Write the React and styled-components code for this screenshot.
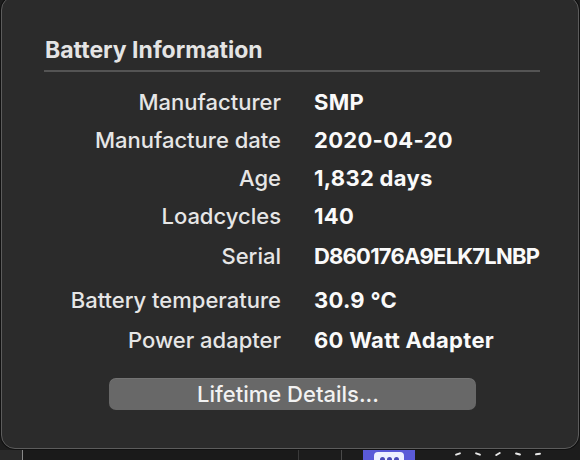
import React from "react";
import styled, { createGlobalStyle } from "styled-components";

const GlobalStyle = createGlobalStyle`
  html, body {
    margin: 0;
    padding: 0;
    background: #1d1d1d;
    overflow: hidden;
  }
  body {
    font-family: Inter, "Noto Sans", "Liberation Sans", sans-serif;
  }
`;

const rows = [
  { label: "Manufacturer", value: "SMP" },
  { label: "Manufacture date", value: "2020-04-20" },
  { label: "Age", value: "1,832 days" },
  { label: "Loadcycles", value: "140" },
  { label: "Serial", value: "D860176A9ELK7LNBP", mt: 2, tight: true },
  { label: "Battery temperature", value: "30.9 °C", mt: 6 },
  { label: "Power adapter", value: "60 Watt Adapter", mt: 2 },
];

const Screen = styled.div`
  width: 580px;
  height: 460px;
  display: flex;
  flex-direction: column;
  overflow: hidden;
`;

const Popover = styled.div`
  margin: -4px 1px 0;
  background: #2b2b2b;
  border: 1px solid #5c5c5c;
  border-radius: 14px;
  padding: 40px 38px 38px 42px;
  box-shadow: 0 0 0 1px #111;
  display: flex;
  flex-direction: column;
`;

const Title = styled.h2`
  margin: 0;
  font-size: 23px;
  line-height: 26px;
  font-weight: 700;
  color: #e4e4e4;
  padding-left: 1px;
`;

const Divider = styled.div`
  margin-top: 7px;
  height: 2px;
  background: #545454;
`;

const InfoGrid = styled.div`
  margin-top: 11px;
  display: grid;
  grid-template-columns: 237px 1fr;
  column-gap: 33px;
`;

const Label = styled.div`
  text-align: right;
  font-size: 22px;
  line-height: 38px;
  font-weight: 500;
  color: #e6e6e6;
  margin-top: ${(p) => p.$mt || 0}px;
  white-space: nowrap;
`;

const Value = styled.div`
  font-size: 22px;
  line-height: 38px;
  font-weight: 700;
  color: #fafafa;
  margin-top: ${(p) => p.$mt || 0}px;
  letter-spacing: ${(p) => (p.$tight ? "-0.8px" : "0.3px")};
  white-space: nowrap;
`;

const Button = styled.button`
  margin: 19px auto 0;
  width: 367px;
  height: 32px;
  border: none;
  border-radius: 7px;
  background: #686868;
  color: #f2f2f2;
  font-family: inherit;
  font-size: 22px;
  font-weight: 500;
  line-height: 32px;
  padding: 0 8px 0 0;
  box-shadow: inset 0 1px 0 rgba(255, 255, 255, 0.08);
`;

const Strip = styled.div`
  flex: 1;
  display: flex;
  align-items: stretch;
  margin-top: 1px;
`;

const Segment = styled.div`
  width: ${(p) => p.$w}px;
  flex: ${(p) => (p.$grow ? 1 : "none")};
  background: ${(p) => p.$bg || "transparent"};
  border-left: ${(p) => (p.$line ? `1px solid ${p.$line}` : "none")};
  display: flex;
  align-items: flex-start;
  justify-content: center;
  gap: 14px;
  padding-top: 2px;
`;

const AppTile = styled.div`
  width: 30px;
  height: 14px;
  background: #eef0ff;
  border-radius: 4px;
  display: flex;
  align-items: center;
  justify-content: center;
  gap: 2px;
  padding-bottom: 4px;
`;

const Dot = styled.span`
  width: 5px;
  height: 5px;
  border-radius: 50%;
  background: #4b4bb8;
`;

const Tick = styled.span`
  width: 6px;
  height: 2px;
  margin-top: 1px;
  background: #e8e8e8;
  border-radius: 1px;
  transform: rotate(${(p) => p.$r || 0}deg);
`;

export default function App() {
  return (
    <>
      <GlobalStyle />
      <Screen>
        <Popover>
          <Title>Battery Information</Title>
          <Divider />
          <InfoGrid>
            {rows.map((r) => (
              <React.Fragment key={r.label}>
                <Label $mt={r.mt}>{r.label}</Label>
                <Value $mt={r.mt} $tight={r.tight}>
                  {r.value}
                </Value>
              </React.Fragment>
            ))}
          </InfoGrid>
          <Button>Lifetime Details...</Button>
        </Popover>
        <Strip>
          <Segment $w={22} $bg="#2a2a2a" />
          <Segment $w={275} $line="#8a8a8a" $bg="#1a1a1a" />
          <Segment $w={42} $line="#3a3a3a" $bg="#1c1c1c" />
          <Segment $w={21} $line="#4a4a4a" $bg="#1c1c1c" />
          <Segment $w={52} $bg="#5a5ad8">
            <AppTile>
              <Dot />
              <Dot />
              <Dot />
            </AppTile>
          </Segment>
          <Segment $grow $bg="#1c1c1c">
            <Tick $r={-20} />
            <Tick $r={20} />
            <Tick $r={-30} />
            <Tick $r={15} />
            <Tick $r={-10} />
          </Segment>
        </Strip>
      </Screen>
    </>
  );
}
